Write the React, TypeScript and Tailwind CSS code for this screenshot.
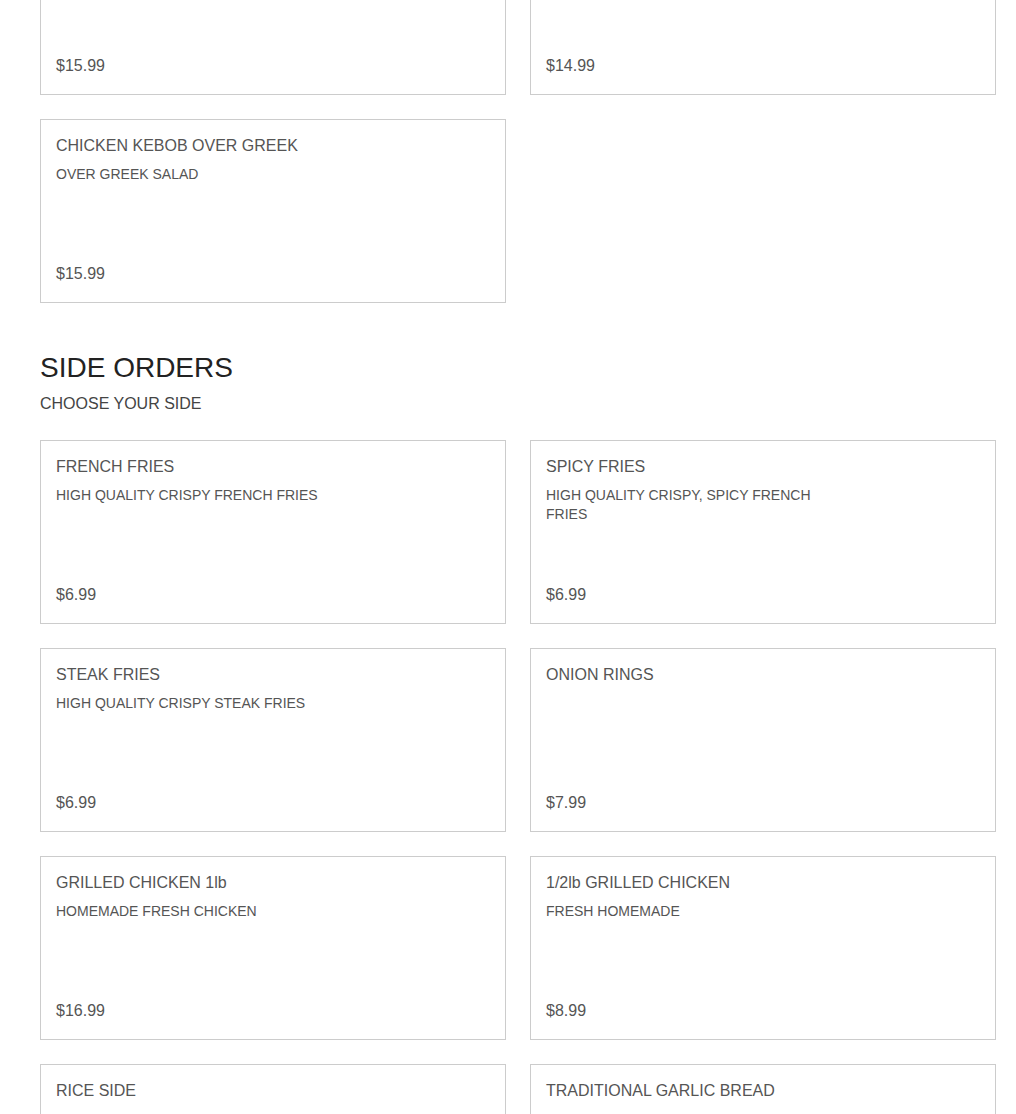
const prevItems = [
  { name: 'CHICKEN KEBOB PLATE', desc: 'SERVED WITH RICE', price: '$15.99' },
  { name: 'BEEF KEBOB WRAP', desc: 'FRESH HOMEMADE', price: '$14.99' },
  { name: 'CHICKEN KEBOB OVER GREEK', desc: 'OVER GREEK SALAD', price: '$15.99' },
];

const sideItems = [
  { name: 'FRENCH FRIES', desc: 'HIGH QUALITY CRISPY FRENCH FRIES', price: '$6.99' },
  { name: 'SPICY FRIES', desc: 'HIGH QUALITY CRISPY, SPICY FRENCH FRIES', price: '$6.99' },
  { name: 'STEAK FRIES', desc: 'HIGH QUALITY CRISPY STEAK FRIES', price: '$6.99' },
  { name: 'ONION RINGS', desc: '', price: '$7.99' },
  { name: 'GRILLED CHICKEN 1lb', desc: 'HOMEMADE FRESH CHICKEN', price: '$16.99' },
  { name: '1/2lb GRILLED CHICKEN', desc: 'FRESH HOMEMADE', price: '$8.99' },
  { name: 'RICE SIDE', desc: 'BASMATI RICE', price: '$4.99' },
  { name: 'TRADITIONAL GARLIC BREAD', desc: 'FRESH BAKED', price: '$4.99' },
];

type Item = { name: string; desc: string; price: string };

function MenuCard({ item }: { item: Item }) {
  return (
    <div className="h-[184px] border border-[#cccccc] bg-white px-[15px] pt-[14px] pb-[17px] flex flex-col">
      <div className="text-[16px] leading-[24px] text-[#555555]">{item.name}</div>
      {item.desc && (
        <div className="mt-[7px] max-w-[280px] text-[14px] leading-[19px] text-[#555555]">{item.desc}</div>
      )}
      <div className="mt-auto text-[16px] leading-[22px] text-[#555555]">{item.price}</div>
    </div>
  );
}

export default function App() {
  return (
    <div className="h-[1114px] overflow-hidden bg-white font-['Liberation_Sans',Arial,sans-serif]">
      <div className="pl-[40px] pr-[20px] -mt-[89px]">
        <div className="grid grid-cols-2 gap-[24px]">
          {prevItems.map((item) => (
            <MenuCard key={item.name} item={item} />
          ))}
        </div>

        <div className="mt-[48px]">
          <h2 className="text-[28px] leading-[34px] text-[#222222]">SIDE ORDERS</h2>
          <p className="mt-[9px] text-[16px] leading-[20px] text-[#444444]">CHOOSE YOUR SIDE</p>
        </div>

        <div className="mt-[26px] grid grid-cols-2 gap-[24px]">
          {sideItems.map((item) => (
            <MenuCard key={item.name} item={item} />
          ))}
        </div>
      </div>
    </div>
  );
}
